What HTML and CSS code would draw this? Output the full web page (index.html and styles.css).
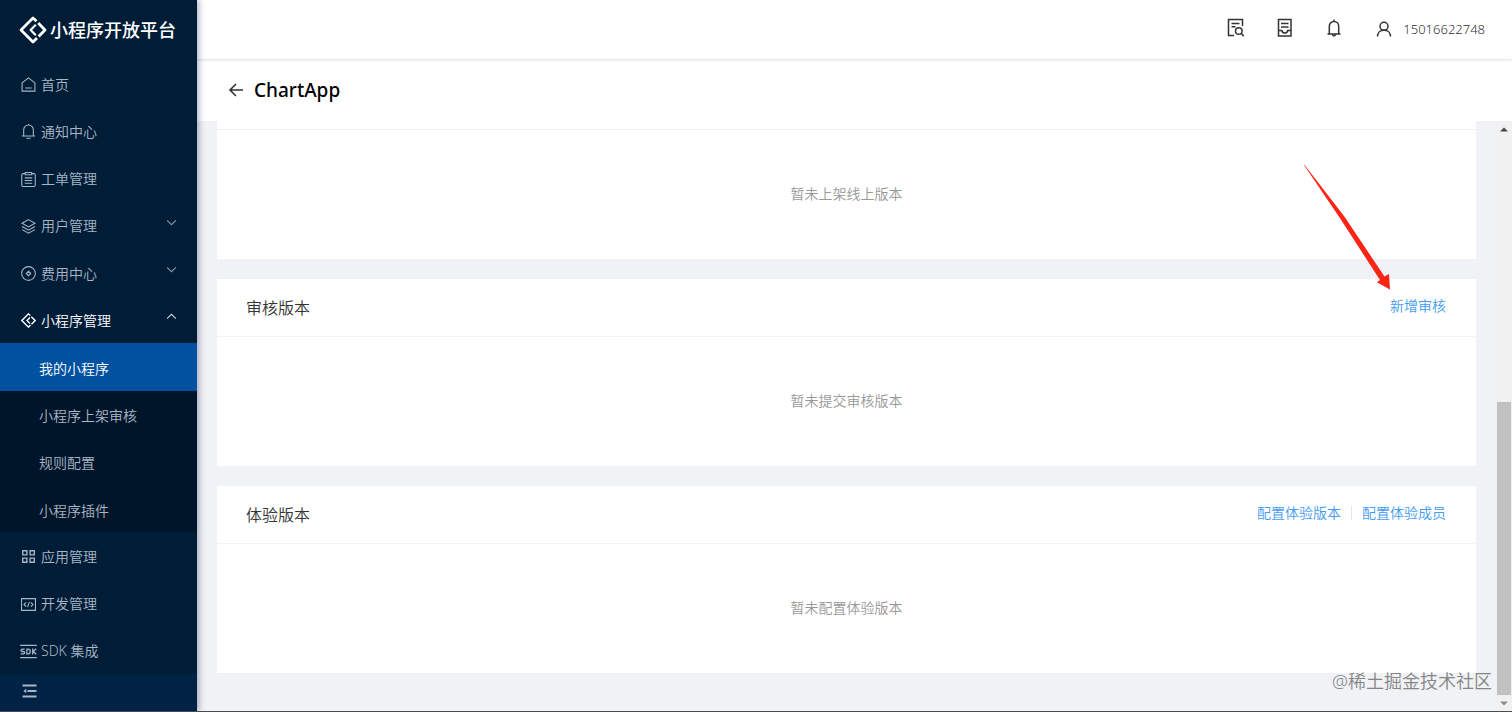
FILE: index.html
```html
<!DOCTYPE html>
<html lang="zh-CN">
<head>
<meta charset="utf-8">
<title>小程序开放平台</title>
<link rel="stylesheet" href="styles.css">
</head>
<body>
<div class="app">
  <aside class="sidebar">
    <div class="brand">
      <svg class="brand-icon" viewBox="0 0 28 28" fill="none" stroke="currentColor" stroke-width="2.800" stroke-linejoin="round"><path d="M17.500 5.300 14 2 2 14l12 12 4-4M19.200 7 26 14l-6.400 6.400"/><path d="M16.800 8.800 11.600 14l5.200 5.200" stroke-width="2.200"/></svg>
      <span>小程序开放平台</span>
    </div>
    <nav class="menu">
      <a class="item" href="#"><svg class="icon" viewBox="0 0 14 14"><path d="M1 5.500 7 .8l6 4.700v7.700H1zM4 10.200h6"/></svg><span>首页</span></a>
      <a class="item" href="#"><svg class="icon" viewBox="0 0 14 14"><path d="M.8 11.200h12.400M2.500 11V5.500a4.500 4.500 0 0 1 9 0V11M5 13.300h4M7 1V0"/></svg><span>通知中心</span></a>
      <a class="item" href="#"><svg class="icon" viewBox="0 0 14 14"><path d="M4 1.500H2a1.300 1.300 0 0 0-1.300 1.300v9.400A1.300 1.300 0 0 0 2 13.500h10a1.300 1.300 0 0 0 1.300-1.300V2.800A1.300 1.300 0 0 0 12 1.500h-2M4 .5h6v2H4zM3.500 5.500h7M3.500 8h7M3.500 10.500h7"/></svg><span>工单管理</span></a>
      <button class="item" type="button"><svg class="icon" viewBox="0 0 14 14"><path d="m7 .6 6 3.400-6 3.400L1 4zM1 7l6 3.400L13 7M1 9.900l6 3.400 6-3.400"/></svg><span>用户管理</span><svg class="chevron" viewBox="0 0 10 10"><path d="m1 3 4 4 4-4"/></svg></button>
      <button class="item" type="button"><svg class="icon" viewBox="0 0 14 14"><circle cx="7" cy="7" r="6.400"/><path d="m7 4.900 2.100 2.100L7 9.100 4.900 7z"/></svg><span>费用中心</span><svg class="chevron" viewBox="0 0 10 10"><path d="m1 3 4 4 4-4"/></svg></button>
      <button class="item open" type="button"><svg class="icon" viewBox="0 0 14 14"><path stroke-width="1.300" d="M8.700 2.300 7 .8.800 7 7 13.200l1.900-1.900M9.600 3.400 13.200 7l-3.400 3.400M8.400 4.200 5.600 7l2.800 2.800"/></svg><span>小程序管理</span><svg class="chevron" viewBox="0 0 10 10"><path d="m1 7 4-4 4 4"/></svg></button>
      <div class="submenu">
        <a class="item sub active" href="#"><span>我的小程序</span></a>
        <a class="item sub" href="#"><span>小程序上架审核</span></a>
        <a class="item sub" href="#"><span>规则配置</span></a>
        <a class="item sub" href="#"><span>小程序插件</span></a>
      </div>
      <a class="item" href="#"><svg class="icon" viewBox="0 0 14 14"><path stroke-width="1.300" d="M1.600 1.600h3.900v3.900H1.600zM8.500 1.600h3.900v3.900H8.500zM1.600 8.500h3.900v3.900H1.600zM8.500 8.500h3.900v3.900H8.500z"/></svg><span>应用管理</span></a>
      <a class="item" href="#"><svg class="icon" viewBox="0 0 14 14"><path d="M.5 1.500h13v11H.5zM4.800 5 2.800 7l2 2M9.200 5l2 2-2 2M7.900 4.500 6.100 9.500"/></svg><span>开发管理</span></a>
      <a class="item" href="#"><svg class="icon wide" viewBox="0 0 14 14"><path d="M-.8 1.300h15.600M-.8 12.700h15.600"/><path stroke-width="1.200" d="M3.400 4.800H1.200Q0 4.800 0 5.900T1.200 7h1q1.200 0 1.200 1.100T2.200 9.200H-.2M5.500 4.800v4.400h1.200q2 0 2-2.200t-2-2.200zM10.900 4.200v5.600M14.200 4.400 11.400 7l2.800 2.600"/></svg><span>SDK 集成</span></a>
    </nav>
    <button class="collapse" type="button" aria-label="收起菜单"><svg viewBox="0 0 14 14"><path d="M0 1.500h14M5 7h9M0 12.500h14"/><path class="solid" d="m3.800 4.800v4.400L.8 7z"/></svg></button>
  </aside>
  <div class="main">
    <header class="topbar">
      <button class="tool" type="button" aria-label="查询"><svg viewBox="0 0 18 20"><path d="M7 17.500H1.500v-16h14V8M4.500 5.500h8M4.500 8.800h4"/><circle cx="11.800" cy="13" r="3.300"/><path d="m14.200 15.500 2.600 2.600"/></svg></button>
      <button class="tool" type="button" aria-label="文档"><svg viewBox="0 0 18 20"><path d="M2.500 1.500h12.500v16.500H2.500zM5 5.500h7.500M5 9h7.500M2.500 12.500h3.300q.5 2.500 3 2.500t3-2.500H15"/></svg></button>
      <button class="tool" type="button" aria-label="通知"><svg viewBox="0 0 18 20"><path d="M2.500 16h13M4.300 16V8.200a4.700 4.700 0 0 1 9.400 0V16M9 3.500V1.500M7.500 16.500q.2 1.500 1.500 1.500t1.500-1.500"/></svg></button>
      <button class="account" type="button"><svg viewBox="0 0 16 16"><circle cx="8" cy="5.300" r="4"/><path d="M1.500 15.500c0-3.500 2.500-6.200 6.500-6.200s6.500 2.700 6.500 6.200"/></svg><span>15016622748</span></button>
    </header>
    <div class="titlebar">
      <button class="back" type="button" aria-label="返回"><svg viewBox="0 0 16 16"><path d="M15 8H2M8 2 2 8l6 6"/></svg></button>
      <h1>ChartApp</h1>
    </div>
    <div class="viewport">
      <main class="content">
        <section class="card">
          <div class="edge"></div>
          <p class="empty">暂未上架线上版本</p>
        </section>
        <section class="card">
          <div class="card-head"><h2>审核版本</h2><div class="links"><a href="#">新增审核</a></div></div>
          <p class="empty">暂未提交审核版本</p>
        </section>
        <section class="card">
          <div class="card-head"><h2>体验版本</h2><div class="links"><a href="#">配置体验版本</a><i class="divider"></i><a href="#">配置体验成员</a></div></div>
          <p class="empty">暂未配置体验版本</p>
        </section>
      </main>
      <div class="scrollbar">
        <svg class="scroll-arrow" viewBox="0 0 8 5"><path d="M0 4.500h8L4 .5z"/></svg>
        <div class="track"><div class="thumb"></div></div>
        <svg class="scroll-arrow down" viewBox="0 0 8 5"><path d="M0 .5h8l-4 4z"/></svg>
      </div>
    </div>
  </div>
  <svg class="pointer" viewBox="0 0 88 126"><path d="M0 0 .8.2 40 51 80.500 111.500 85 109 86 124.500 72.800 117.300 76 115 36.500 54z"/></svg>
  <div class="watermark">@稀土掘金技术社区</div>
</div>
</body>
</html>
```
FILE: styles.css
```css
* { box-sizing: border-box; }
body {
  margin: 0;
  font: 350 14px/20px "Noto Sans", "Noto Sans CJK SC", sans-serif;
  color: #333;
}
a { color: inherit; text-decoration: none; }
button { border: 0; padding: 0; background: none; color: inherit; font: inherit; cursor: pointer; }
h1, h2, p { margin: 0; }
svg { display: block; flex: none; fill: none; stroke: currentColor; }
.app {
  position: relative;
  display: flex;
  height: 100vh;
  border-bottom: 1px solid #484b50;
  overflow: hidden;
}

.sidebar {
  z-index: 2;
  flex: none;
  display: flex;
  flex-direction: column;
  width: 197px;
  background: #001d38;
  color: #a9b6c5;
  box-shadow: 2px 0 6px rgba(20, 30, 80, 0.35);
}
.brand {
  display: flex;
  align-items: center;
  gap: 3px;
  height: 60px;
  padding-left: 19px;
  color: #fff;
  font-size: 18px;
  font-weight: 500;
}
.brand-icon { width: 28px; height: 28px; }
.menu { flex: 1; display: grid; grid-auto-rows: 1fr; }
.item {
  display: flex;
  align-items: center;
  gap: 5px;
  padding: 2px 20px 0 21px;
  text-align: left;
  white-space: nowrap;
}
.icon { width: 15px; height: 15px; }
.wide { overflow: visible; }
.chevron { width: 11px; height: 11px; margin: 0 0 8px auto; opacity: 0.8; }
.open { color: #fff; }
.submenu { grid-row: span 4; display: grid; grid-auto-rows: 1fr; background: #00152a; }
.sub { padding: 4px 20px 0 39px; }
.active { background: #0052a1; color: #fff; }
.collapse { height: 37px; padding: 0 0 3px 22px; background: #002244; }
.collapse svg { width: 15px; height: 14px; stroke-width: 2; }
.collapse .solid { fill: currentColor; stroke: none; }

.main { flex: 1; min-width: 0; display: flex; flex-direction: column; background: #f0f2f5; }
.topbar {
  z-index: 1;
  display: flex;
  align-items: center;
  justify-content: flex-end;
  gap: 31px;
  height: 59px;
  padding-right: 27px;
  background: #fff;
  box-shadow: 0 1px 3px rgba(0, 21, 41, 0.14);
}
.tool svg { width: 18px; height: 20px; margin-bottom: 3px; stroke-width: 1.5; }
.account { display: flex; align-items: center; gap: 11px; padding: 0 0 2px 2px; font-size: 13px; }
.account svg { width: 16px; height: 16px; stroke-width: 1.5; }
.titlebar {
  display: flex;
  align-items: center;
  gap: 10px;
  height: 62px;
  padding-left: 31px;
  background: #fff;
}
.back svg { width: 16px; height: 16px; stroke-width: 1.6; }
h1 { font-size: 19px; line-height: 28px; font-weight: 500; color: #000; }

.viewport { flex: 1; min-height: 0; display: flex; }
.content {
  flex: 1;
  display: flex;
  flex-direction: column;
  gap: 20px;
  padding: 0 20px;
}
.card { background: #fff; }
.edge { height: 9px; border-bottom: 1px solid #eef0f2; }
.card-head {
  display: flex;
  align-items: center;
  justify-content: space-between;
  height: 58px;
  padding: 0 30px 0 29px;
  border-bottom: 1px solid #f2f4f5;
}
h2 { font-size: 16px; line-height: 24px; font-weight: 350; }
.links { display: flex; align-items: center; padding-bottom: 3px; color: #429cf2; }
.divider { width: 1px; height: 14px; margin: 0 10px; background: #e4e6e8; }
.empty { padding: 54px 0 55px; text-align: center; color: #999; }

.scrollbar {
  display: flex;
  flex-direction: column;
  align-items: center;
  width: 16px;
  padding: 6px 1px 5px;
  background: #f1f1f1;
}
.scroll-arrow { width: 8px; height: 5px; fill: #444; stroke: none; }
.down { fill: #8b8b8b; }
.track { flex: 1; display: flex; flex-direction: column; justify-content: flex-end; align-self: stretch; padding-bottom: 6px; }
.thumb { height: 52%; background: #c1c1c1; }

.pointer {
  position: absolute;
  z-index: 2;
  top: 165px;
  right: 120px;
  width: 88px;
  height: 126px;
  fill: #fc2415;
  stroke: none;
}
.watermark {
  position: absolute;
  z-index: 2;
  right: 20px;
  bottom: 17px;
  font-size: 18px;
  line-height: 26px;
  font-weight: 350;
  color: #858585;
}
```
